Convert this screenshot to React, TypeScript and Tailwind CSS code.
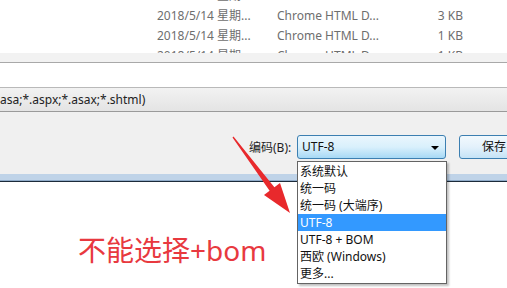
import React from "react"

const files = [
  { date: "2018/5/14 星期...", type: "Chrome HTML D...", size: "2 KB" },
  { date: "2018/5/14 星期...", type: "Chrome HTML D...", size: "3 KB" },
  { date: "2018/5/14 星期...", type: "Chrome HTML D...", size: "1 KB" },
  { date: "2018/5/14 星期...", type: "Chrome HTML D...", size: "1 KB" },
]

const encodings = ["系统默认", "统一码", "统一码 (大端序)", "UTF-8", "UTF-8 + BOM", "西欧 (Windows)", "更多..."]

function Arrow() {
  return (
    <svg className="pointer-events-none absolute left-0 top-0" width="507" height="288" viewBox="0 0 507 288">
      <polygon
        points="233.5,136.6 274.4,187.2 280,183 290,213 264,195 269.6,190.8 232.5,137.4"
        fill="#e8292c"
      />
    </svg>
  )
}

export default function App() {
  return (
    <div
      className="relative flex h-[288px] w-[507px] flex-col overflow-hidden bg-white text-[12px]"
      style={{ fontFamily: '"Noto Sans", "Noto Sans CJK SC", sans-serif' }}
    >
      {/* file list */}
      <div className="h-[53px] shrink-0 overflow-hidden">
        <div className="mt-[-14px] flex flex-col">
          {files.map((f, i) => (
            <div key={i} className="flex h-[20px] items-center pl-[157px] text-[#6e6e6e]">
              <span className="w-[120px] shrink-0">{f.date}</span>
              <span className="w-[125px] shrink-0">{f.type}</span>
              <span className="w-[61px] shrink-0 text-right">{f.size}</span>
            </div>
          ))}
        </div>
      </div>

      <div className="h-[10px] shrink-0 border-b border-[#a9a9a9] bg-[#f2f2f2]" />
      <div className="h-[25px] shrink-0 border-b border-[#b9b9b9] bg-white" />
      <div className="flex h-[24px] shrink-0 items-center border-b border-[#9a9a9a] bg-gradient-to-b from-[#f2f2f2] to-[#e4e4e4] text-[#222]">
        asa;*.aspx;*.asax;*.shtml)
      </div>

      {/* dialog bottom */}
      <div className="flex h-[62px] shrink-0 items-start bg-[#f0f0f0] pt-[23px]">
        <span className="ml-[249px] mt-[4px] w-[48px] shrink-0 text-[#1e1e1e]">编码(B):</span>
        <div className="relative flex h-[24px] w-[149px] shrink-0 items-center rounded-[3px] border border-[#3c7fb1] bg-gradient-to-b from-[#eaf6fd] via-[#d9f0fc] to-[#a7d9f5] pl-[4px] text-[#111]">
          UTF-8
          <span className="absolute right-[6px] top-[10px] h-0 w-0 border-x-[4px] border-t-[4px] border-x-transparent border-t-black" />
        </div>
        <div className="ml-[13px] flex h-[24px] w-[70px] shrink-0 items-center rounded-[3px] border border-[#3c7fb1] bg-gradient-to-b from-[#f2f9fd] via-[#e3f1fb] to-[#c5e3f6] pl-[22px] text-[#111]">
          保存
        </div>
      </div>
      <div className="h-[6px] shrink-0 bg-[#bfd3e8]" />
      <div className="h-px shrink-0 bg-[#8fabc9]" />
      <div className="h-px shrink-0 bg-[#1c2b3a]" />

      {/* white area with note */}
      <div className="flex flex-1 flex-col bg-white pl-[78px] pt-[52px]">
        <span className="text-[28px] leading-[32px] text-[#e8393f]">不能选择+bom</span>
      </div>

      {/* open dropdown list */}
      <div className="absolute left-[297px] top-[161px] flex w-[150px] flex-col border border-[#646464] bg-white py-px shadow-[2px_2px_2px_rgba(0,0,0,0.25)]">
        {encodings.map((e) => (
          <div
            key={e}
            className={
              e === "UTF-8"
                ? "flex h-[17px] items-center bg-[#3399ff] pl-[2px] text-white"
                : "flex h-[17px] items-center pl-[2px] text-[#111]"
            }
          >
            {e}
          </div>
        ))}
      </div>

      <Arrow />
    </div>
  )
}
